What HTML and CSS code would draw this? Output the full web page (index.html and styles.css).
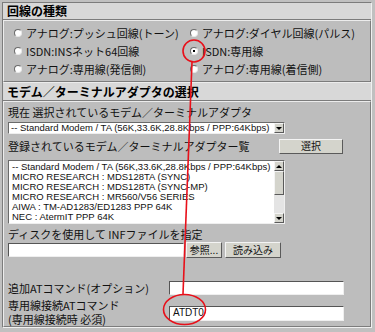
FILE: index.html
```html
<html>
<head>
<title>回線の種類</title>
<link rel="stylesheet" href="styles.css">
</head>
<body>
<div class="panel">
  <div class="head">回線の種類</div>
  <div class="sec lines">
    <label class="opt"><span class="radio"></span>アナログ:プッシュ回線(トーン)</label>
    <label class="opt"><span class="radio"></span>アナログ:ダイヤル回線(パルス)</label>
    <label class="opt"><span class="radio"></span>ISDN:INSネット64回線</label>
    <label class="opt"><span class="radio on"></span>ISDN:専用線</label>
    <label class="opt"><span class="radio"></span>アナログ:専用線(発信側)</label>
    <label class="opt"><span class="radio"></span>アナログ:専用線(着信側)</label>
  </div>
  <div class="head head2">モデム／ターミナルアダプタの選択</div>
  <div class="sec modem">
    <div class="txt">現在 選択されているモデム／ターミナルアダプタ</div>
    <div class="select">
      <span class="val">-- Standard Modem / TA (56K,33.6K,28.8Kbps / PPP:64Kbps)</span>
      <span class="arrow"><i class="down"></i></span>
    </div>
    <div class="row">
      <div class="txt">登録されているモデム／ターミナルアダプター覧</div>
      <div class="btn wide">選択</div>
    </div>
    <div class="list">
      <div class="items">
        <div>-- Standard Modem / TA (56K,33.6K,28.8Kbps / PPP:64Kbps)</div>
        <div>MICRO RESEARCH : MDS128TA (SYNC)</div>
        <div>MICRO RESEARCH : MDS128TA (SYNC-MP)</div>
        <div>MICRO RESEARCH : MR560/V56 SERIES</div>
        <div>AIWA : TM-AD1283/ED1283 PPP 64K</div>
        <div>NEC : AtermIT PPP 64K</div>
      </div>
      <div class="bar">
        <span class="arrow"><i class="up"></i></span>
        <span class="thumb"></span>
        <span class="track"></span>
        <span class="arrow"><i class="down"></i></span>
      </div>
    </div>
    <div class="txt">ディスクを使用して INFファイルを指定</div>
    <div class="row files">
      <div class="input file"></div>
      <div class="btn">参照...</div>
      <div class="btn">読み込み</div>
    </div>
    <div class="at">
      <div class="txt">追加ATコマンド(オプション)</div>
      <div class="input"></div>
      <div class="two">
        <div class="txt">専用線接続ATコマンド</div>
        <div class="txt">(専用線接続時 必須)</div>
      </div>
      <div class="input low">ATDT0</div>
    </div>
  </div>
</div>
<svg class="marks" width="375" height="332" viewBox="0 0 375 332">
  <circle cx="194" cy="51" r="11" fill="none" stroke="#e8101a" stroke-width="1.6"/>
  <line x1="192" y1="62" x2="183" y2="294" stroke="#e8101a" stroke-width="1.6"/>
  <ellipse cx="184.5" cy="309.5" rx="21" ry="15" fill="none" stroke="#e8101a" stroke-width="1.6"/>
</svg>
</body>
</html>
```

FILE: styles.css
```css
* {box-sizing:border-box;}
BODY {margin:0;width:375px;height:332px;overflow:hidden;position:relative;background:#c0c0c0;
  font-family:"Noto Sans CJK JP","Liberation Sans",sans-serif;font-size:11px;color:#111;}

.panel {margin:2px 0 0 2px;width:370px;height:326px;border:1px solid;border-color:#7c7c7c #f0f0f0 #f0f0f0 #7c7c7c;background:#bdbdbd;}
.head {height:17px;line-height:16px;padding-left:4px;background:#d8d8d8;border-bottom:1px solid #7c7c7c;font-weight:bold;font-size:12px;color:#000;}
.head2 {height:19px;line-height:17px;border-top:1px solid #ececec;}

.sec {border:1px solid;border-color:#ececec #7c7c7c #7c7c7c #ececec;}
.lines {height:62px;padding:3px 0 0 10px;display:grid;grid-template-columns:176px 1fr;grid-auto-rows:18px;}
.opt {display:flex;align-items:center;gap:4px;white-space:nowrap;}
.radio {width:8px;height:8px;border-radius:50%;background:#fff;border:1px solid;border-color:#6a6a6a #e8e8e8 #e8e8e8 #6a6a6a;position:relative;flex:none;}
.radio.on::after {content:"";position:absolute;left:2px;top:2px;width:2px;height:2px;background:#000;}

.modem {height:226px;padding:4px 0 0 4px;}
.txt {line-height:12px;white-space:nowrap;}
.row {display:flex;align-items:center;margin-top:4px;height:16px;}
.row .txt {width:271px;}

.select {margin-top:4px;width:277px;height:12px;background:#fff;border:1px solid;border-color:#6a6a6a #efefef #efefef #6a6a6a;display:flex;overflow:hidden;}
.val {flex:1;font:9.5px "Liberation Sans",sans-serif;line-height:10px;padding-left:2px;white-space:nowrap;overflow:hidden;}
.arrow {width:10px;height:10px;background:#d4d4cc;border:1px solid;border-color:#f4f4f4 #5a5a5a #5a5a5a #f4f4f4;display:flex;align-items:center;justify-content:center;flex:none;}
.down {border-left:3px solid transparent;border-right:3px solid transparent;border-top:3px solid #000;}
.up {border-left:3px solid transparent;border-right:3px solid transparent;border-bottom:3px solid #000;}

.btn {height:15px;background:#d4d4cc;border:1px solid;border-color:#f4f4f4 #5a5a5a #5a5a5a #f4f4f4;
  display:flex;align-items:center;justify-content:center;font-size:10px;line-height:12px;white-space:nowrap;}
.wide {width:64px;}

.list {margin-top:6px;width:277px;height:64px;background:#fff;border:1px solid;border-color:#6a6a6a #efefef #efefef #6a6a6a;display:flex;}
.items {flex:1;padding:1px 0 0 3px;font:9.5px "Liberation Sans",sans-serif;line-height:10px;overflow:hidden;white-space:nowrap;}
.bar {width:10px;display:flex;flex-direction:column;}
.thumb {height:24px;background:#d4d4cc;border:1px solid;border-color:#f4f4f4 #5a5a5a #5a5a5a #f4f4f4;}
.track {flex:1;background:#e4e4e4;}

.list + .txt {margin-top:4px;}
.files {margin-top:2px;gap:2px;}
.files .btn {height:16px;}
.files .btn:nth-child(2) {width:36px;}
.files .btn:last-child {width:56px;margin-left:1px;}
.input {height:14px;background:#fff;border:1px solid;border-color:#555 #efefef #efefef #555;
  font:10px "Liberation Sans",sans-serif;line-height:12px;padding-left:3px;}
.file {width:176px;}

.at {margin-top:23px;display:grid;grid-template-columns:161px 175px;row-gap:3px;align-items:center;}
.two .txt {line-height:14px;}
.low {align-self:start;margin-top:8px;height:15px;}

.marks {position:absolute;left:0;top:0;pointer-events:none;}
```
